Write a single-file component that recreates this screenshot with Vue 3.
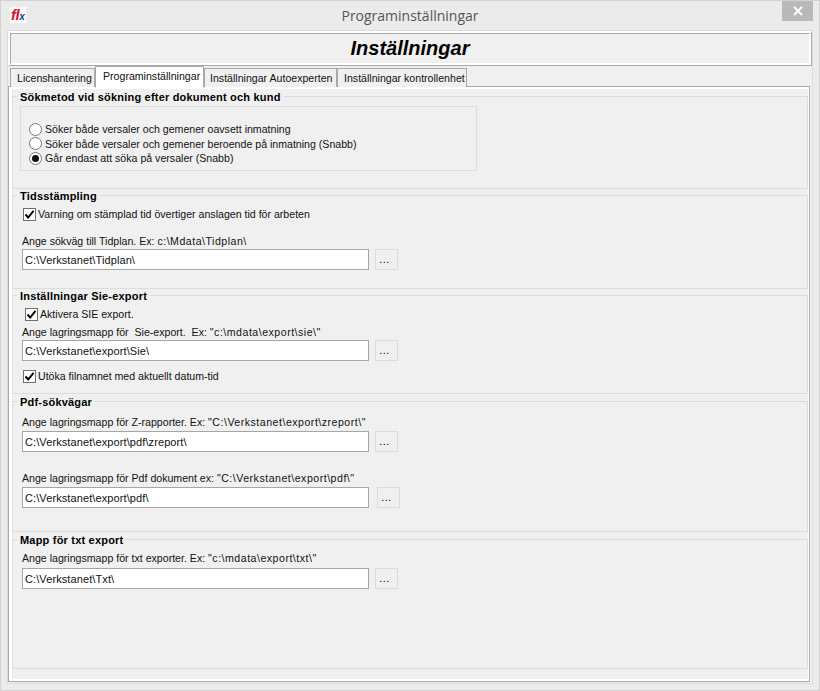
<template>
  <div class="window">
    <div class="titlebar">
      <div class="app-icon"><span class="icon-red">fl</span><span class="icon-blue">x</span></div>
      <span class="title">Programinställningar</span>
      <button class="close" type="button">
        <svg width="12" height="10" viewBox="0 0 12 10">
          <path d="M2 1 L10 9 M10 1 L2 9" stroke="#fff" stroke-width="2" fill="none" />
        </svg>
      </button>
    </div>

    <div class="client">
      <div class="header">
        <div class="header-inner">Inställningar</div>
      </div>

      <div class="tabs">
        <div
          v-for="tab in tabs"
          :key="tab.name"
          class="tab"
          :class="[tab.cls, { active: tab.active }]"
        >{{ tab.name }}</div>
      </div>

      <div class="panel">
        <div class="panel-inner">
          <!-- Sökmetod -->
          <div class="group g1">
            <div class="legend">Sökmetod vid sökning efter dokument och kund</div>
            <div class="radio-box">
              <div v-for="opt in searchOptions" :key="opt.text" class="radio-row">
                <span class="radio"><span v-if="opt.on" class="dot"></span></span>
                <span>{{ opt.text }}</span>
              </div>
            </div>
          </div>

          <!-- Tidsstämpling -->
          <div class="group g2">
            <div class="legend">Tidsstämpling</div>
            <div class="check-row warn">
              <span class="check"><svg width="11" height="11" viewBox="0 0 11 11"><path d="M1.5 5.5 L4.2 8.5 L9.5 1.8" stroke="#000" stroke-width="2" fill="none" /></svg></span>
              <span>Varning om stämplad tid övertiger anslagen tid för arbeten</span>
            </div>
            <div class="label plan-label">Ange sökväg till Tidplan. Ex: <span class="ex">c:\Mdata\Tidplan\</span></div>
            <div class="path-row">
              <input class="path" type="text" readonly value="C:\Verkstanet\Tidplan\" />
              <button class="browse" type="button">...</button>
            </div>
          </div>

          <!-- Sie-export -->
          <div class="group g3">
            <div class="legend">Inställningar Sie-export</div>
            <div class="check-row sie-on">
              <span class="check"><svg width="11" height="11" viewBox="0 0 11 11"><path d="M1.5 5.5 L4.2 8.5 L9.5 1.8" stroke="#000" stroke-width="2" fill="none" /></svg></span>
              <span>Aktivera SIE export.</span>
            </div>
            <div class="label sie-label">{{ sieLabel }}<span class="ex">{{ siePath }}</span></div>
            <div class="path-row">
              <input class="path" type="text" readonly value="C:\Verkstanet\export\Sie\" />
              <button class="browse" type="button">...</button>
            </div>
            <div class="check-row sie-date">
              <span class="check"><svg width="11" height="11" viewBox="0 0 11 11"><path d="M1.5 5.5 L4.2 8.5 L9.5 1.8" stroke="#000" stroke-width="2" fill="none" /></svg></span>
              <span>Utöka filnamnet med aktuellt datum-tid</span>
            </div>
          </div>

          <!-- Pdf -->
          <div class="group g4">
            <div class="legend">Pdf-sökvägar</div>
            <div class="label z-label">Ange lagringsmapp för Z-rapporter. Ex: <span class="ex">"C:\Verkstanet\export\zreport\"</span></div>
            <div class="path-row">
              <input class="path" type="text" readonly value="C:\Verkstanet\export\pdf\zreport\" />
              <button class="browse" type="button">...</button>
            </div>
            <div class="label pdf-label">Ange lagringsmapp för Pdf dokument ex: <span class="ex">"C:\Verkstanet\export\pdf\"</span></div>
            <div class="path-row pdf-row">
              <input class="path" type="text" readonly value="C:\Verkstanet\export\pdf\" />
              <button class="browse" type="button">...</button>
            </div>
          </div>

          <!-- Txt -->
          <div class="group g5">
            <div class="legend">Mapp för txt export</div>
            <div class="label txt-label">Ange lagringsmapp för txt exporter. Ex: <span class="ex">"c:\mdata\export\txt\"</span></div>
            <div class="path-row">
              <input class="path" type="text" readonly value="C:\Verkstanet\Txt\" />
              <button class="browse" type="button">...</button>
            </div>
          </div>
        </div>
      </div>
    </div>
  </div>
</template>

<script setup>
const tabs = [
  { name: 'Licenshantering', cls: 'tab-lic' },
  { name: 'Programinställningar', cls: 'tab-prog', active: true },
  { name: 'Inställningar Autoexperten', cls: 'tab-auto' },
  { name: 'Inställningar kontrollenhet', cls: 'tab-ctrl' }
];

const searchOptions = [
  { text: 'Söker både versaler och gemener oavsett inmatning' },
  { text: 'Söker både versaler och gemener beroende på inmatning (Snabb)' },
  { text: 'Går endast att söka på versaler (Snabb)', on: true }
];

// double spaces are in the original label
const sieLabel = 'Ange lagringsmapp för  Sie-export.  Ex: ';
const siePath = '"c:\\mdata\\export\\sie\\"';
</script>

<style>
html, body {
  margin: 0;
  background: #ebebeb;
}
</style>

<style scoped>
.window {
  width: 820px;
  height: 691px;
  box-sizing: border-box;
  background: #ebebeb;
  border: 1px solid #d2d2d2;
  display: flex;
  flex-direction: column;
  font-family: "Liberation Sans", Arial, sans-serif;
  font-size: 10.6px;
  color: #111;
  overflow: hidden;
}

.titlebar {
  position: relative;
  height: 29px;
  flex: none;
  display: flex;
  align-items: center;
  justify-content: center;
}

.app-icon {
  position: absolute;
  left: 9px;
  top: 6px;
  width: 16px;
  height: 16px;
  background: #fbfbfb;
  overflow: hidden;
  white-space: nowrap;
  font: italic bold 15px/15px "Liberation Sans", Arial, sans-serif;
  letter-spacing: -0.5px;
  padding-left: 1px;
  box-sizing: border-box;
}

.icon-red {
  color: #d8102c;
}

.icon-blue {
  color: #1c3f9c;
  font-size: 10px;
}

.title {
  font-family: "Open Sans", sans-serif;
  font-size: 14px;
  color: #555;
  margin-top: -1px;
}

.close {
  position: absolute;
  right: 6px;
  top: 0;
  width: 31px;
  height: 20px;
  padding: 0;
  border: 0;
  background: #b9b9b9;
  display: flex;
  align-items: center;
  justify-content: center;
}

.client {
  flex: 1;
  margin: 0 6px 6px;
  background: #f0f0f0;
  border: 1px solid #dcdcdc;
  display: flex;
  flex-direction: column;
  min-height: 0;
}

.header {
  height: 35px;
  flex: none;
  box-sizing: border-box;
  border-style: solid;
  border-width: 2px 1px 1px 2px;
  border-color: #fff #a9a9a9 #a9a9a9 #fff;
}

.header-inner {
  height: 100%;
  box-sizing: border-box;
  border-style: solid;
  border-width: 1px 2px 2px 1px;
  border-color: #a9a9a9 #fff #fff #a9a9a9;
  text-align: center;
  font: italic bold 20px/29px "Liberation Sans", Arial, sans-serif;
  color: #000;
}

.tabs {
  position: relative;
  z-index: 1;
  display: flex;
  align-items: flex-end;
  height: 21px;
  flex: none;
  padding-left: 2px;
  margin-bottom: -1px;
}

.tab {
  box-sizing: border-box;
  height: 19px;
  border: 1px solid #a9a9a9;
  border-bottom: 0;
  background: #f0f0f0;
  line-height: 18px;
  white-space: nowrap;
}

.tab-lic {
  width: 85px;
  padding-left: 6px;
}

.tab-prog {
  width: 109px;
  padding-left: 7px;
}

.tab-auto {
  width: 133px;
  padding-left: 5px;
}

.tab-ctrl {
  width: 130px;
  padding-left: 6px;
}

.tab.active {
  height: 22px;
  background: #fff;
  border-bottom: 1px solid #fff;
  line-height: 19px;
  position: relative;
  margin-bottom: -1px;
}

.panel {
  flex: 1;
  margin: 0 2px 1px 0;
  border: 1px solid #a9a9a9;
  min-height: 0;
}

.panel-inner {
  height: 100%;
  box-sizing: border-box;
  background: #f0f0f0;
  border-style: solid;
  border-width: 2px 1px 2px 3px;
  border-color: #fff;
  padding-top: 7px;
}

.group {
  position: relative;
  box-sizing: border-box;
  border: 1px solid #dcdcdc;
  margin-bottom: 6px;
  padding-left: 9px;
}

.g1 {
  height: 93px;
}

.g2 {
  height: 94px;
}

.g3 {
  height: 99px;
}

.g4 {
  height: 131px;
  margin-top: 7px;
}

.g5 {
  height: 130px;
  margin-top: 7px;
  margin-bottom: 0;
}

.legend {
  position: absolute;
  left: 4px;
  top: -6px;
  padding: 0 3px;
  background: #f0f0f0;
  font-size: 11px;
  font-weight: bold;
  line-height: 13px;
  color: #000;
  letter-spacing: 0.2px;
}

.radio-box {
  box-sizing: border-box;
  width: 457px;
  height: 65px;
  margin-top: 9px;
  margin-left: -2px;
  border: 1px solid #dcdcdc;
  padding: 15px 0 0 8px;
}

.radio-row {
  display: flex;
  align-items: center;
  height: 14.5px;
  white-space: nowrap;
}

.radio {
  box-sizing: border-box;
  width: 13px;
  height: 13px;
  border: 1px solid #777;
  border-radius: 50%;
  background: #fff;
  margin-right: 3px;
  flex: none;
  display: flex;
  align-items: center;
  justify-content: center;
}

.dot {
  width: 7px;
  height: 7px;
  border-radius: 50%;
  background: #111;
}

.check-row {
  display: flex;
  align-items: center;
  height: 14px;
  white-space: nowrap;
}

.check {
  box-sizing: border-box;
  width: 13px;
  height: 13px;
  border: 1px solid #707070;
  background: #fff;
  margin-right: 2px;
  flex: none;
  display: flex;
  align-items: center;
  justify-content: center;
}

.label {
  line-height: 13px;
  white-space: pre;
}

/* the paths in the labels run wider than the words before them */
.ex {
  letter-spacing: 0.5px;
}

.path-row {
  display: flex;
  gap: 6px;
}

.pdf-row {
  gap: 8px;
}

.path {
  box-sizing: border-box;
  width: 347px;
  height: 21px;
  padding: 0 2px;
  margin: 0;
  border: 1px solid #a6a6a6;
  border-radius: 0;
  outline: none;
  background: #fff;
  font-family: "Liberation Sans", Arial, sans-serif;
  font-size: 11px;
  letter-spacing: 0.1px;
  color: #111;
}

.browse {
  box-sizing: border-box;
  width: 23px;
  height: 21px;
  padding: 0 4px 2px 0;
  margin: 0;
  border: 1px solid #dcdcdc;
  background: #f0f0f0;
  font-family: "Liberation Sans", Arial, sans-serif;
  font-size: 11px;
  letter-spacing: 0.44px;
  color: #000;
}

/* vertical rhythm of each group */
.warn {
  margin-top: 11px;
  margin-left: 1px;
}

.plan-label {
  margin-top: 14px;
  margin-bottom: 1px;
}

.sie-on {
  margin-top: 11px;
  margin-left: 3px;
}

.sie-label {
  margin-top: 5px;
  margin-bottom: 1px;
}

.sie-date {
  margin-top: 8px;
  margin-left: 1px;
}

.z-label {
  margin-top: 14px;
  margin-bottom: 2px;
}

.pdf-label {
  margin-top: 20px;
  margin-bottom: 2px;
}

.txt-label {
  margin-top: 12px;
  margin-bottom: 3px;
}
</style>
